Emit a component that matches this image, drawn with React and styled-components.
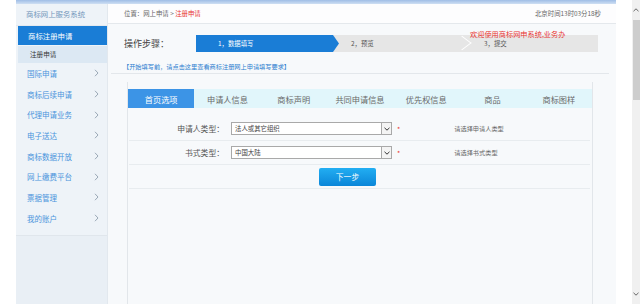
import React from 'react';
import styled, { createGlobalStyle } from 'styled-components';

const GlobalStyle = createGlobalStyle`
  html, body {
    margin: 0;
    padding: 0;
    background: #fff;
  }
  body {
    font-family: "Noto Sans CJK SC", "Noto Sans", sans-serif;
    color: #555;
  }
`;

const Page = styled.div`
  display: flex;
  width: 640px;
  height: 304px;
  overflow: hidden;
  background: #fff;
`;

const Gutter = styled.div`
  width: ${p => p.w}px;
  flex-shrink: 0;
  background: #fff;
`;

const Frame = styled.div`
  width: 600px;
  display: flex;
  flex-direction: column;
`;

const TopStrip = styled.div`
  height: 4px;
  background: linear-gradient(to bottom, #9fbde6, #cfdff3);
`;

const Body = styled.div`
  flex: 1;
  display: flex;
`;

/* ---------- sidebar ---------- */

const Sidebar = styled.aside`
  width: 91px;
  flex-shrink: 0;
  background: #e9eff5;
  border-right: 1px solid #e2e8ee;
  display: flex;
  flex-direction: column;
`;

const SideMenu = styled.div`
  background: #eef3f8;
  border-bottom: 1px solid #e0e6ec;
  padding-bottom: 6px;
`;

const SideTitle = styled.div`
  height: 21px;
  line-height: 20px;
  padding-left: 10px;
  font-size: 7.4px;
  color: #7497bb;
  border-bottom: 1px solid #e3e9ef;
`;

const ActiveItem = styled.div`
  margin: 0 0 1px 2px;
  height: 19px;
  line-height: 19px;
  padding-left: 10px;
  background: #1a7dd6;
  color: #fff;
  font-size: 7.4px;
`;

const SubItem = styled.div`
  margin-left: 2px;
  height: 17px;
  line-height: 17px;
  padding-left: 12px;
  background: #dce8f3;
  color: #333;
  font-size: 6.6px;
`;

const MenuItem = styled.div`
  display: flex;
  justify-content: space-between;
  align-items: center;
  height: 20.7px;
  padding: 0 8px 0 11px;
  color: #4a93dc;
  font-size: 7.5px;
`;

/* ---------- main ---------- */

const Main = styled.main`
  flex: 1;
  background: #f7f9fb;
  display: flex;
  flex-direction: column;
`;

const Breadcrumb = styled.div`
  height: 19px;
  display: flex;
  align-items: center;
  justify-content: space-between;
  padding: 0 16px;
  background: #fdfdfe;
  border-bottom: 1px solid #e4e8ec;
  font-size: 6.4px;
  color: #666;
`;

const Red = styled.span`
  color: #e8332f;
`;

const StepsRow = styled.div`
  position: relative;
  display: flex;
  align-items: center;
  height: 39px;
  padding-left: 16px;
`;

const StepsLabel = styled.div`
  width: 72px;
  font-size: 9px;
  color: #444;
`;

const StepBar = styled.div`
  display: flex;
  width: 402px;
  height: 17px;
  background: #e6e6e6;
  font-size: 6.4px;
`;

const Step = styled.div`
  position: relative;
  width: ${p => p.w}px;
  height: 100%;
  display: flex;
  align-items: center;
  padding-left: ${p => p.pad}px;
  box-sizing: border-box;
  color: ${p => (p.active ? '#fff' : '#555')};
  background: ${p => (p.active ? '#1a7dd6' : 'transparent')};
  clip-path: ${p =>
    p.active ? 'polygon(0 0, calc(100% - 6px) 0, 100% 50%, calc(100% - 6px) 100%, 0 100%)' : 'none'};

  ${p =>
    p.divider &&
    `
    &::after {
      content: '';
      position: absolute;
      right: 3px;
      top: 2px;
      width: 11px;
      height: 11px;
      border-top: 1px solid #fff;
      border-right: 1px solid #fff;
      transform: rotate(45deg) skew(-8deg, -8deg);
    }
  `}
`;

const Welcome = styled.div`
  position: absolute;
  left: 362px;
  top: 5px;
  font-size: 7.2px;
  color: #e8332f;
`;

const Notice = styled.div`
  height: 10px;
  line-height: 8px;
  font-size: 6.2px;
  color: #2b7dcf;
  border-bottom: 1px solid #e3e7eb;
  margin: 0 8px 0 3px;
  padding-left: 12px;
`;

const Panel = styled.section`
  flex: 1;
  margin: 8px 24px 0 19px;
  padding-top: 7px;
  background: #f7f9fb;
  border-left: 1px solid #e2e6ea;
  border-right: 1px solid #e2e6ea;
`;

const Tabs = styled.div`
  display: flex;
  width: 464px;
  height: 19px;
  background: #e1f6fb;
`;

const Tab = styled.div`
  flex: 1;
  display: flex;
  align-items: center;
  justify-content: center;
  font-size: 8.2px;
  color: ${p => (p.active ? '#fff' : '#6a6a6a')};
  background: ${p => (p.active ? '#3c94e6' : 'transparent')};
`;

const Form = styled.div`
  margin-top: 9px;
`;

const Row = styled.div`
  display: flex;
  align-items: center;
  height: 23px;
  margin: 0 2px 0 1px;
  border-bottom: 1px solid #e8ecef;
`;

const Label = styled.div`
  width: 95px;
  text-align: right;
  font-size: 7.8px;
  color: #555;
`;

const Select = styled.div`
  display: flex;
  align-items: stretch;
  width: 161px;
  height: 13px;
  margin-left: 7px;
  background: #fff;
  border: 1px solid #a9a9a9;
  box-sizing: border-box;
`;

const SelectText = styled.div`
  flex: 1;
  padding-left: 3px;
  line-height: 11px;
  font-size: 6.4px;
  color: #444;
`;

const SelectArrow = styled.div`
  width: 9px;
  display: flex;
  align-items: center;
  justify-content: center;
  border-left: 1px solid #a9a9a9;
  background: #f4f4f4;
`;

const Star = styled.span`
  margin-left: 5px;
  color: #e8332f;
  font-size: 7px;
`;

const Hint = styled.div`
  margin-left: 54px;
  font-size: 6.2px;
  color: #666;
`;

const NextButton = styled.button`
  margin-left: 190px;
  width: 57px;
  height: 18px;
  border: none;
  border-radius: 2px;
  background: linear-gradient(to bottom, #22aef2, #0b86d8);
  color: #fff;
  font-family: inherit;
  font-size: 7.8px;
  padding: 0;
`;

/* ---------- scrollbar ---------- */

const Scrollbar = styled.div`
  width: 8px;
  flex-shrink: 0;
  background: #f0f0f0;
  display: flex;
  flex-direction: column;
  align-items: center;
`;

const ScrollArrow = styled.div`
  height: ${p => p.h}px;
  display: flex;
  align-items: center;
  justify-content: center;
`;

const Thumb = styled.div`
  width: 7px;
  height: 80px;
  background: #cdcdcd;
`;

const ScrollSpace = styled.div`
  flex: 1;
`;

const menu = ['国际申请', '商标后续申请', '代理申请业务', '电子送达', '商标数据开放', '网上缴费平台', '票据管理', '我的账户'];
const tabs = ['首页选项', '申请人信息', '商标声明', '共同申请信息', '优先权信息', '商品', '商标图样'];
const fields = [
  { label: '申请人类型：', value: '法人或其它组织', hint: '请选择申请人类型' },
  { label: '书式类型：', value: '中国大陆', hint: '请选择书式类型' },
];

const RightMark = () => (
  <svg width="5" height="8" viewBox="0 0 5 8">
    <path d="M1 0.8 L4 4 L1 7.2" fill="none" stroke="#9aa8b6" strokeWidth="1" />
  </svg>
);

const DownMark = ({ color = '#555' }) => (
  <svg width="6" height="4" viewBox="0 0 6 4">
    <path d="M0.5 0.8 L3 3.2 L5.5 0.8" fill="none" stroke={color} strokeWidth="1" />
  </svg>
);

const UpMark = () => (
  <svg width="6" height="4" viewBox="0 0 6 4">
    <path d="M0.5 3.2 L3 0.8 L5.5 3.2" fill="none" stroke="#666" strokeWidth="1" />
  </svg>
);

const App = () => {
  return (
    <>
      <GlobalStyle />
      <Page>
        <Gutter w={16} />
        <Frame>
          <TopStrip />
          <Body>
            <Sidebar>
              <SideMenu>
                <SideTitle>商标网上服务系统</SideTitle>
                <ActiveItem>商标注册申请</ActiveItem>
                <SubItem>注册申请</SubItem>
                {menu.map(item => (
                  <MenuItem key={item}>
                    <span>{item}</span>
                    <RightMark />
                  </MenuItem>
                ))}
              </SideMenu>
            </Sidebar>
            <Main>
              <Breadcrumb>
                <span>
                  位置：网上申请 &gt; <Red>注册申请</Red>
                </span>
                <span>北京时间13时03分18秒</span>
              </Breadcrumb>
              <StepsRow>
                <StepsLabel>操作步骤：</StepsLabel>
                <StepBar>
                  <Step active w={143} pad={22}>1，数据填写</Step>
                  <Step divider w={132} pad={12}>2，预览</Step>
                  <Step w={127} pad={13}>3，提交</Step>
                </StepBar>
                <Welcome>欢迎使用商标网申系统,业务办</Welcome>
              </StepsRow>
              <Notice>【开始填写前，请点击这里查看商标注册网上申请填写要求】</Notice>
              <Panel>
                <Tabs>
                  {tabs.map((t, i) => (
                    <Tab key={t} active={i === 0}>{t}</Tab>
                  ))}
                </Tabs>
                <Form>
                  {fields.map(f => (
                    <Row key={f.label}>
                      <Label>{f.label}</Label>
                      <Select>
                        <SelectText>{f.value}</SelectText>
                        <SelectArrow>
                          <DownMark color="#333" />
                        </SelectArrow>
                      </Select>
                      <Star>*</Star>
                      <Hint>{f.hint}</Hint>
                    </Row>
                  ))}
                  <Row>
                    <NextButton>下一步</NextButton>
                  </Row>
                </Form>
              </Panel>
            </Main>
          </Body>
        </Frame>
        <Gutter w={16} />
        <Scrollbar>
          <ScrollArrow h={20}>
            <UpMark />
          </ScrollArrow>
          <Thumb />
          <ScrollSpace />
          <ScrollArrow h={20}>
            <DownMark color="#666" />
          </ScrollArrow>
        </Scrollbar>
      </Page>
    </>
  );
};

export default App;
